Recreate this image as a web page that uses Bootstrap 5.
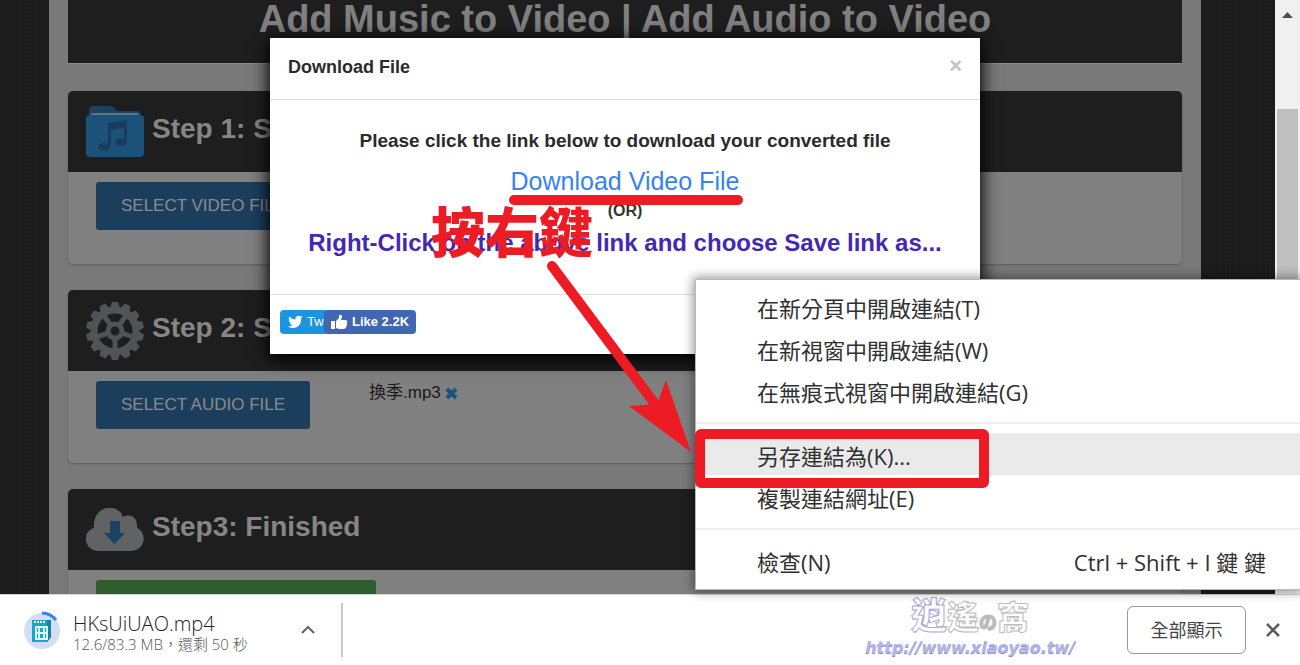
<!DOCTYPE html>
<html lang="zh-Hant">
<head>
<meta charset="utf-8">
<meta name="viewport" content="width=device-width, initial-scale=1">
<title>Add Music to Video | Add Audio to Video</title>
<link href="https://cdn.jsdelivr.net/npm/bootstrap@5.3.0/dist/css/bootstrap.min.css" rel="stylesheet">
<style>
  body { font-family: "Liberation Sans", "Noto Sans CJK TC", sans-serif; color: #1a1a1a; }
  .ui-font { font-family: "Open Sans", "Noto Sans CJK TC", sans-serif; font-weight: 300; }
  .web-view { padding-right: 50px; background-color: #1c1c1c;
    background-image: repeating-linear-gradient(90deg, rgba(255,255,255,.014) 0 1px, transparent 1px 5px), repeating-linear-gradient(0deg, rgba(0,0,0,.12) 0 1px, transparent 1px 4px); }
  .site { max-width: 1152px; background: #797979; padding: 0 19px; }
  .step-box { background: #808080; border-radius: 5px; margin-bottom: 26px; box-shadow: 0 1px 2px #5c5c5c; }
  .step-head { background: #1e1e1e; border-radius: 5px 5px 0 0; height: 81px; padding: 0 18px 6px; gap: 8px; }
  .step-head svg { margin-top: 6px; }
  .step-head h2 { font-size: 28px; font-weight: 700; color: #868686; }
  .step-body { min-height: 92px; padding: 10px 28px; gap: 59px; }
  .step-body .btn { width: 214px; height: 48px; border-radius: 3px; font-size: 17px; color: #8b8b8b; background: #1b3e5d; border: 0; white-space: nowrap; padding: 0; }
  .step-body .btn-done { width: 280px; background: #2d5d2d; }
  .title-box { height: 64px; background: #1e1e1e; margin-bottom: 27px; border-bottom: 1px solid #8a8a8a; }
  .title-box h1 { font-size: 38px; line-height: 38px; font-weight: 700; color: #808080; white-space: nowrap; }
  .file-name { font-size: 17px; line-height: 24px; }
  .dialog-layer { padding: 38px 50px 0 0; }
  .dialog-box { width: 710px; height: 316px; box-shadow: 0 4px 16px 2px #000; }
  .dialog-head { height: 62px; padding: 0 18px 2px; border-bottom: 1px solid #dedede; }
  .dialog-head h4 { font-size: 18px; font-weight: 700; color: #2b2b2b; }
  .dialog-head button { font-size: 22px; line-height: 24px; color: #c4c4c4; font-weight: 700; margin-bottom: 4px; }
  .dialog-main { padding-top: 29px; height: 195px; border-bottom: 1px solid #dedede; }
  .ask { font-size: 19px; line-height: 24px; font-weight: 700; color: #2b2b2b; }
  .get { font-size: 25px; line-height: 32px; color: #3583ee; margin: 12px 0; }
  .alt-word { font-size: 16px; line-height: 20px; font-weight: 700; color: #333; margin-top: -8px; }
  .hint { font-size: 24px; line-height: 30px; font-weight: 700; color: #4428b4; margin-top: 7px; }
  .social { padding: 15px 10px; }
  .social a { height: 24px; font-size: 13px; line-height: 24px; color: #fff; gap: 4px; border-radius: 4px; }
  .tw { width: 48px; margin-right: -4px; padding-left: 8px; background: #1d94e0; }
  .fb { width: 92px; padding-left: 7px; background: #4267b2; font-weight: 700; white-space: nowrap; }
  .scroll-bar { right: 0; width: 25px; background: #f0f0f0; padding: 11px 2px 0; }
  .scroll-bar div { background: #bfbfbf; margin-top: 91px; height: 480px; }
  .link-menu { top: 279px; right: 0; width: 605px; padding: 5px 0 8px; background: #fff; border: 1px solid #b8b8b8; border-right: 0; box-shadow: 0 0 10px 2px rgba(0,0,0,.4); font-size: 22px; }
  .link-menu button { height: 42px; line-height: 36px; padding: 5px 34px 1px 61px; border: 0; background: none; color: #303030; text-align: left; white-space: nowrap; }
  .link-menu .chosen { background: #eaeaea; }
  .link-menu hr { margin: 11px 0 9px; border: 0; border-top: 2px solid #efefef; opacity: 1; }
  .marks { left: 0; top: 0; width: 1300px; height: 665px; pointer-events: none; }
  .note { left: 431px; top: 200px; font: 900 54px/60px "Noto Sans CJK TC", sans-serif; color: #ed1c24; }
  .shelf { height: 71px; background: #fff; border-top: 1px solid #d5d5d5; padding: 0 18px 0 23px; }
  .name { font-size: 20px; line-height: 22px; color: #222; }
  .progress-note { font-size: 15px; line-height: 18px; color: #555; }
  .file-info { width: 224px; margin: 0 4px 0 11px; padding-top: 6px; white-space: nowrap; }
  .divide { width: 2px; height: 54px; background: #c9c9c9; margin-left: 26px; }
  .show-all { width: 119px; height: 48px; border: 1px solid #999; border-radius: 6px; background: #fff; font-size: 18px; color: #444; margin: 0 18px 0 52px; }
  .stamp { line-height: 1; text-decoration: none; margin-bottom: 8px; }
  .stamp-name { font: 900 32px/36px "Noto Sans CJK TC", sans-serif; color: #fff; -webkit-text-stroke: 1px #bdbdbd; }
  .stamp-name .lilac { font-size: 36px; -webkit-text-stroke-color: #aaa8d4; }
  .stamp-name small { font-size: 18px; color: #bbb; }
  .stamp-url { font: italic 700 16px/18px "DejaVu Sans", sans-serif; color: #b3b5e8; text-shadow: 0 1px 0 #8b87d0; }
</style>
</head>
<body class="d-flex flex-column vh-100 overflow-hidden position-relative">
<main class="web-view flex-grow-1 position-relative overflow-hidden" style="min-height:0">
  <div class="site mx-auto h-100">
    <header class="title-box text-center"><h1 class="m-0">Add Music to Video | Add Audio to Video</h1></header>
    <section class="step-box">
      <div class="step-head d-flex align-items-center">
        <svg width="58" height="54" viewBox="0 0 58 54"><path d="M3 10V5Q3 1 7 1h17q3 0 5 3l2 2h20q4 0 4 5z" fill="#1c4263"/><path d="M6 8h46l2 4H3z" fill="#647280"/><rect y="10" width="58" height="42" rx="4" fill="#1b5279"/><path d="M22 18l19-3v22h-3V23l-13 2v16h-3z" fill="#1b3c5e"/><ellipse cx="18" cy="42" rx="6" ry="4" fill="#1b3c5e"/><ellipse cx="35" cy="37" rx="6" ry="4" fill="#1b3c5e"/></svg>
        <h2 class="m-0">Step 1: Select Video File</h2>
      </div>
      <div class="step-body d-flex align-items-start"><button type="button" class="btn">SELECT VIDEO FILE</button></div>
    </section>
    <section class="step-box">
      <div class="step-head d-flex align-items-center">
        <svg width="58" height="58" viewBox="-29 -29 58 58">
          <g fill="#4f5458"><circle r="21" fill="none" stroke="#4f5458" stroke-width="7"/>
          <path id="tt" d="M-5-23l2-6h6l2 6zM-5 23l2 6h6l2-6z"/><use href="#tt" transform="rotate(25.7)"/><use href="#tt" transform="rotate(51.4)"/><use href="#tt" transform="rotate(77.1)"/><use href="#tt" transform="rotate(102.8)"/><use href="#tt" transform="rotate(128.5)"/><use href="#tt" transform="rotate(154.3)"/></g>
          <circle r="7" fill="none" stroke="#4f5458" stroke-width="5"/>
          <g stroke="#4f5458" stroke-width="5"><path id="sp" d="M0 8v12"/><use href="#sp" transform="rotate(72)"/><use href="#sp" transform="rotate(144)"/><use href="#sp" transform="rotate(216)"/><use href="#sp" transform="rotate(288)"/></g>
        </svg>
        <h2 class="m-0">Step 2: Select Audio File</h2>
      </div>
      <div class="step-body d-flex align-items-start"><button type="button" class="btn">SELECT AUDIO FILE</button>
        <div class="file-name d-flex align-items-center gap-1"><span>換季.mp3</span><svg width="13" height="13" viewBox="0 0 13 13"><path d="M2 2l9 9M11 2l-9 9" stroke="#1b5279" stroke-width="4"/></svg></div></div>
    </section>
    <section class="step-box">
      <div class="step-head d-flex align-items-center">
        <svg width="58" height="44" viewBox="0 0 58 44"><path d="M13 43C-3 43-4 23 8 20 6-3 32-6 37 9c8-4 15 1 14 11 11 5 8 23-6 23z" fill="#606264"/><path d="M24 13h10v12h5L28.500 36 18 25h6z" fill="#1b4263"/></svg>
        <h2 class="m-0">Step3: Finished</h2>
      </div>
      <div class="step-body"><button type="button" class="btn btn-done" aria-label="Finish"></button></div>
    </section>
  </div>
  <div class="scroll-bar position-absolute top-0 bottom-0 text-center"><svg class="d-block mx-auto" width="11" height="7" viewBox="0 0 11 7"><path d="M0 7l5.500-6L11 7z" fill="#505050"/></svg><div></div></div>
  <div class="dialog-layer position-absolute top-0 start-0 w-100">
    <div class="dialog-box bg-white mx-auto" role="dialog" aria-label="Download File">
      <div class="dialog-head d-flex align-items-center justify-content-between"><h4 class="m-0">Download File</h4><button type="button" class="border-0 bg-transparent p-0" aria-label="Close">×</button></div>
      <div class="dialog-main text-center">
        <p class="ask m-0">Please click the link below to download your converted file</p>
        <p class="get"><a href="#" class="text-decoration-none text-reset">Download Video File</a></p>
        <p class="alt-word mb-0">(OR)</p>
        <p class="hint mb-0">Right-Click on the above link and choose Save link as...</p>
      </div>
      <div class="social d-flex">
        <a href="#" class="tw d-flex align-items-center text-decoration-none"><svg class="flex-shrink-0" width="15" height="14" viewBox="0 0 24 22"><path fill="#fff" d="M24 3a10 10 0 0 1-3 1 5 5 0 0 0 2-3 10 10 0 0 1-3 1 5 5 0 0 0-8 5A14 14 0 0 1 2 2a5 5 0 0 0 1 6 5 5 0 0 1-2-1 5 5 0 0 0 4 5H3a5 5 0 0 0 4 4 10 10 0 0 1-7 2C12 25 22 17 21 5z"/></svg><span>Tw</span></a>
        <a href="#" class="fb position-relative d-flex align-items-center text-decoration-none"><svg width="17" height="16" viewBox="0 0 17 16"><path fill="#fff" d="M0 7h4v8H0zM5 7l3-3V1q3-1 3 2L10 6h5q2 1 1 3 0 5-3 6H8l-3-1z"/></svg><span>Like 2.2K</span></a>
      </div>
    </div>
  </div>
</main>
<footer class="shelf ui-font d-flex align-items-center flex-shrink-0">
  <svg width="39" height="40" viewBox="0 0 39 40"><circle cx="19" cy="21" r="18" fill="#d3def5"/><path d="M19 3a18 18 0 0 1 14 7" fill="none" stroke="#3b82ea" stroke-width="3"/><path d="M9 10h19v17l-4 5H9z" fill="#1ca3c8"/><path d="M24 10h4v17l-4 5z" fill="#167fae"/><path d="M13 17h11v12H13zM16 17v12M21 17v12M13 23h11" fill="none" stroke="#d9f7fb" stroke-width="2"/><path d="M11 12h12" stroke="#fff" stroke-width="2" stroke-dasharray="2 1"/></svg>
  <div class="file-info"><div class="name">HKsUiUAO.mp4</div><div class="progress-note">12.6/83.3 MB，還剩 50 秒</div></div>
  <button type="button" class="border-0 bg-transparent p-0 d-flex" aria-label="Options"><svg width="14" height="10" viewBox="0 0 14 10"><path d="M1 8l6-6 6 6" fill="none" stroke="#666" stroke-width="2"/></svg></button>
  <div class="divide"></div>
  <a href="#" class="stamp ms-auto text-center"><span class="stamp-name d-block"><span class="lilac">逍</span>遙<small>の</small>窩</span><span class="stamp-url d-block">http://www.xiaoyao.tw/</span></a>
  <button type="button" class="show-all">全部顯示</button>
  <button type="button" class="border-0 bg-transparent p-0 d-flex" aria-label="Close"><svg width="18" height="16" viewBox="0 0 18 16"><path d="M3 2l12 12M15 2L3 14" stroke="#5c5c5c" stroke-width="2.500"/></svg></button>
</footer>
<div class="link-menu ui-font position-absolute d-flex flex-column" role="menu">
  <button type="button">在新分頁中開啟連結(T)</button>
  <button type="button">在新視窗中開啟連結(W)</button>
  <button type="button">在無痕式視窗中開啟連結(G)</button>
  <hr>
  <button type="button" class="chosen">另存連結為(K)...</button>
  <button type="button">複製連結網址(E)</button>
  <hr>
  <button type="button" class="d-flex justify-content-between"><span>檢查(N)</span><span>Ctrl + Shift + I 鍵 鍵</span></button>
</div>
<svg class="marks position-absolute" viewBox="0 0 1300 665" fill="none" stroke="#ed1c24" stroke-width="10">
  <path d="M514 200H738" stroke-linecap="round"/>
  <path d="M552 266L655 404" stroke-linecap="round"/>
  <path d="M691 452L629 406l28-2 9-24z" fill="#ed1c24" stroke="none"/>
  <rect x="700" y="434" width="284" height="49" rx="1" stroke-linejoin="round"/>
</svg>
<span class="note position-absolute">按右鍵</span>
<script src="https://cdn.jsdelivr.net/npm/bootstrap@5.3.0/dist/js/bootstrap.bundle.min.js"></script>
</body>
</html>
